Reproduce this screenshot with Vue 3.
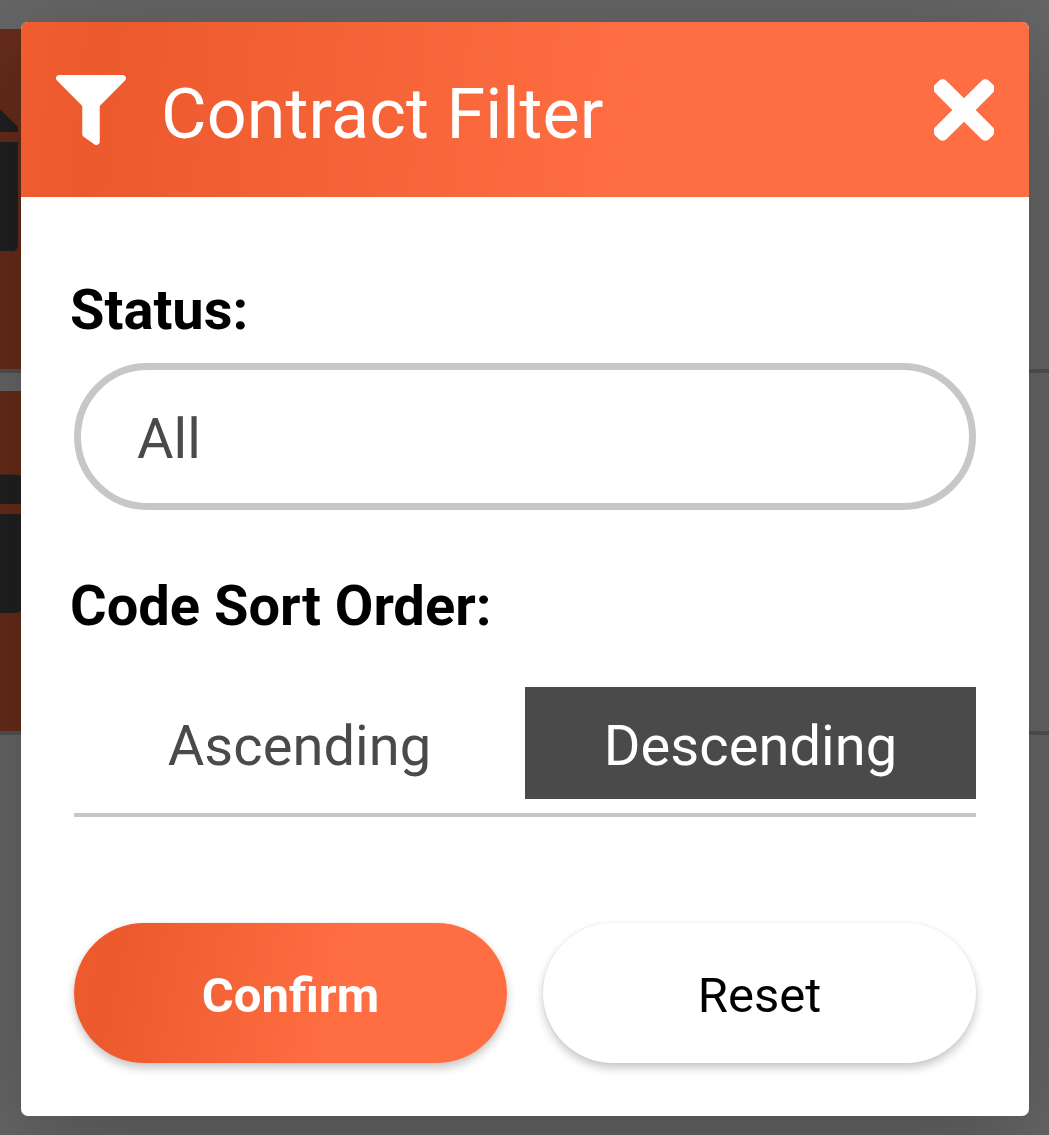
<script setup>
import { ref } from 'vue'

const status = ref('All')
const orders = ['Ascending', 'Descending']
const order = ref('Descending')
</script>

<template>
  <div class="screen">
    <div class="page">
      <div class="row">
        <div class="thumb">
          <svg width="21" height="340" viewBox="0 0 21 340">
            <path d="M0 80L18 98V103H0zM0 113H18V216Q18 222 12 222H0z" fill="#202020" />
          </svg>
        </div>
      </div>
      <div class="row">
        <div class="thumb">
          <svg width="21" height="340" viewBox="0 0 21 340">
            <path d="M0 83.500H15Q19 83.500 21 85V113H0zM0 123H21V220Q19 222 15 222H0z" fill="#202020" />
          </svg>
        </div>
      </div>
    </div>

    <section class="dialog">
      <header class="head">
        <svg class="funnel" viewBox="0 0 512 512">
          <path d="M487.976 0H24.028C2.710 0-8.047 25.866 7.058 40.971L192 225.941V432c0 7.831 3.821 15.170 10.237 19.662l80 55.980C298.020 518.690 320 507.493 320 487.980V225.941l184.947-184.970C520.021 25.896 509.338 0 487.976 0z" />
        </svg>
        <h1>Contract Filter</h1>
        <svg class="close" viewBox="4 80 344 352">
          <path d="M242.720 256l100.070-100.070c12.280-12.280 12.280-32.190 0-44.480l-22.240-22.240c-12.280-12.280-32.190-12.280-44.480 0L176 189.280 75.930 89.210c-12.280-12.280-32.190-12.280-44.480 0L9.210 111.450c-12.280 12.280-12.280 32.190 0 44.480L109.280 256 9.210 356.070c-12.280 12.280-12.280 32.190 0 44.480l22.240 22.240c12.280 12.280 32.200 12.280 44.480 0L176 322.720l100.070 100.070c12.280 12.280 32.200 12.280 44.480 0l22.240-22.240c12.280-12.280 12.280-32.190 0-44.480L242.720 256z" />
        </svg>
      </header>

      <div class="body">
        <div class="label">Status:</div>
        <div class="select">{{ status }}</div>

        <div class="label second">Code Sort Order:</div>
        <div class="orders">
          <div
            v-for="o in orders"
            :key="o"
            class="order"
            :class="{ active: o === order }"
            @click="order = o"
          >{{ o }}</div>
        </div>

        <div class="actions">
          <button class="btn primary">Confirm</button>
          <button class="btn">Reset</button>
        </div>
      </div>
    </section>
  </div>
</template>

<style>
body {
  margin: 0;
}
</style>

<style scoped>
.screen {
  position: relative;
  width: 1049px;
  height: 1135px;
  overflow: hidden;
  background: #666;
  font-family: Roboto, "Liberation Sans", sans-serif;
}
.page {
  display: flex;
  flex-direction: column;
  gap: 18px;
  padding-top: 29px;
}
.row {
  height: 340px;
  border-bottom: 4px solid #525252;
}
.thumb {
  width: 21px;
  height: 340px;
  background: #662c1a;
}
.thumb svg {
  display: block;
}
.dialog {
  position: absolute;
  left: 21px;
  top: 22px;
  width: 1008px;
  height: 1094px;
  border-radius: 7px;
  overflow: hidden;
  background: #fff;
  box-shadow: 0 24px 110px rgba(0, 0, 0, 0.26);
}
.head {
  display: flex;
  align-items: center;
  box-sizing: border-box;
  height: 175px;
  padding: 0 35px;
  color: #fff;
  background: linear-gradient(96deg, #f05d31 0%, #eb592d 8%, #ff6e42 60%);
}
.head svg {
  fill: currentColor;
  flex: none;
}
.funnel {
  width: 70px;
  height: 70px;
}
.close {
  width: 60px;
  height: 62px;
}
h1 {
  flex: 1;
  margin: 0;
  padding: 9px 0 0 35px;
  font-size: 70px;
  line-height: 82px;
  font-weight: 400;
  letter-spacing: 0.12px;
}
.body {
  padding: 80px 53px 0;
}
.label {
  margin-left: -4px;
  font-size: 56px;
  line-height: 66px;
  font-weight: 700;
  color: #000;
}
.label.second {
  margin-top: 63px;
}
.select {
  box-sizing: border-box;
  height: 147px;
  margin-top: 20px;
  padding: 5px 56px 0;
  border: 7px solid #c7c7c7;
  border-radius: 74px;
  font-size: 56px;
  line-height: 128px;
  color: #4a4a4a;
}
.orders {
  display: flex;
  margin-top: 48px;
  padding-bottom: 14px;
  border-bottom: 4px solid #c7c7c7;
}
.order {
  flex: 1;
  box-sizing: border-box;
  height: 112px;
  padding-top: 6px;
  text-align: center;
  font-size: 56px;
  line-height: 106px;
  letter-spacing: 0.08px;
  color: #4a4a4a;
}
.order.active {
  background: #4a4a4a;
  color: #fff;
}
.actions {
  display: flex;
  gap: 36px;
  margin-top: 106px;
}
.btn {
  flex: 1;
  height: 140px;
  padding: 6px 0 0;
  border: 0;
  border-radius: 70px;
  background: #fff;
  box-shadow: 0 5px 10px rgba(0, 0, 0, 0.22), 0 0 3px rgba(0, 0, 0, 0.06);
  font-family: inherit;
  font-size: 49px;
  line-height: 134px;
  color: #000;
}
.btn.primary {
  background: linear-gradient(101deg, #ee5b2f 0%, #eb592d 10%, #ff6e42 60%);
  font-weight: 700;
  color: #fff;
}
</style>
